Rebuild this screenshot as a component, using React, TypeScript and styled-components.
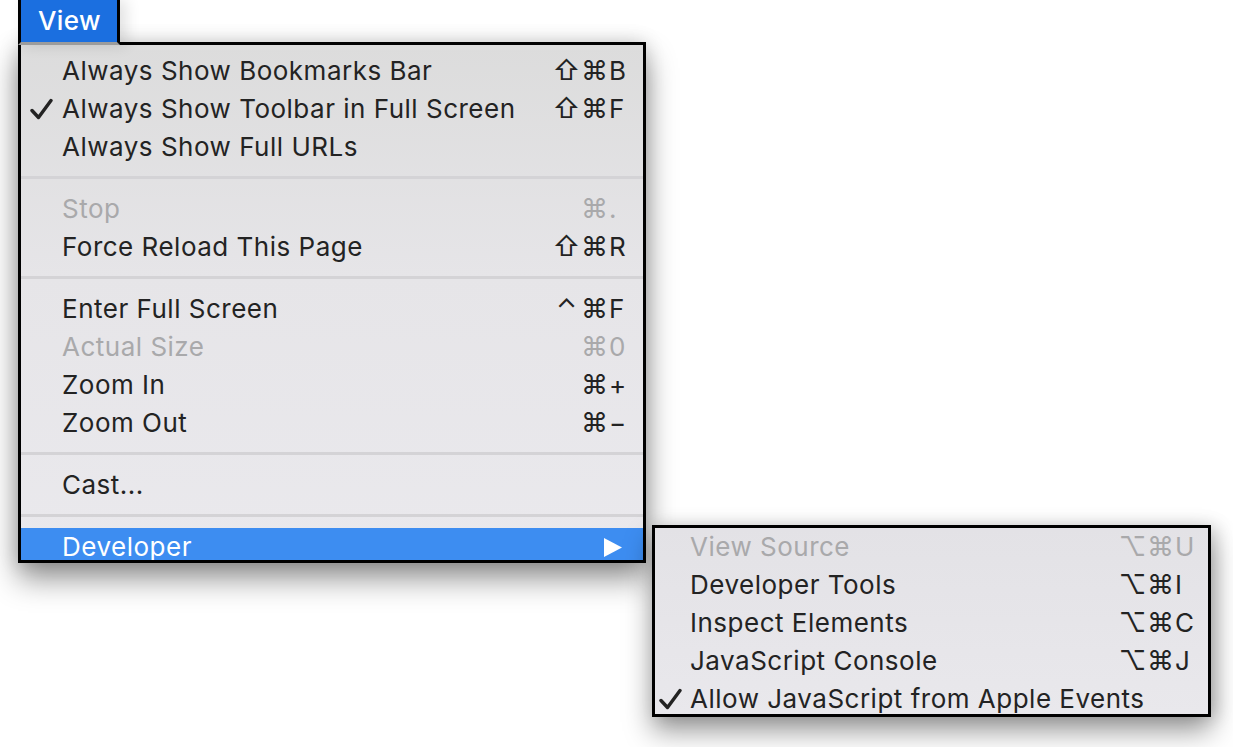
import React from "react";
import styled, { createGlobalStyle } from "styled-components";

const GlobalStyle = createGlobalStyle`
  html, body {
    margin: 0;
    padding: 0;
    background: #ffffff;
    overflow: hidden;
  }
  * {
    box-sizing: border-box;
  }
`;

const Stage = styled.div`
  width: 1233px;
  height: 747px;
  background: #ffffff;
  display: flex;
  align-items: flex-start;
  padding-left: 18px;
  overflow: hidden;
  font-family: Inter, "Noto Sans", "DejaVu Sans", sans-serif;
`;

const MainColumn = styled.div`
  width: 628px;
  display: flex;
  flex-direction: column;
  align-items: flex-start;
`;

const Tab = styled.div`
  position: relative;
  z-index: 2;
  width: 102px;
  height: 45px;
  margin-bottom: -3px;
  background: #1b6fe0;
  border-left: 3px solid #000;
  border-right: 3px solid #000;
  border-bottom: 3px solid #9c9c9c;
  padding-left: 17px;
  color: #ffffff;
  font-size: 26px;
  font-weight: 500;
  letter-spacing: 0.4px;
  line-height: 42px;
  box-shadow: 6px 0 14px rgba(0, 0, 0, 0.12);
`;

const Menu = styled.div<{ $w: number; $h: number; $pad: number }>`
  position: relative;
  z-index: 1;
  width: ${(p) => p.$w}px;
  height: ${(p) => p.$h}px;
  border: 3px solid #000;
  padding-top: ${(p) => p.$pad}px;
  background: linear-gradient(180deg, #dcdcdc 0%, #e6e5e8 45%, #eae9ed 100%);
  overflow: hidden;
  display: flex;
  flex-direction: column;
  box-shadow: 0 16px 28px rgba(0, 0, 0, 0.42), 0 0 18px rgba(0, 0, 0, 0.16);
`;

const SubMenu = styled(Menu)`
  margin-top: 525px;
  margin-left: 6px;
  z-index: 3;
  background: linear-gradient(180deg, #e3e2e6 0%, #e9e8ec 100%);
  box-shadow: 0 14px 26px rgba(0, 0, 0, 0.4), 6px 0 16px rgba(0, 0, 0, 0.14);
`;

const Row = styled.div<{ $indent: number; $padRight: number; $disabled?: boolean; $active?: boolean }>`
  flex: 0 0 38px;
  height: 38px;
  display: flex;
  align-items: center;
  padding-left: ${(p) => p.$indent}px;
  padding-right: ${(p) => p.$padRight}px;
  position: relative;
  font-size: 26px;
  letter-spacing: 0.5px;
  line-height: 38px;
  color: ${(p) => (p.$active ? "#ffffff" : p.$disabled ? "#a9a9ab" : "#232323")};
  background: ${(p) => (p.$active ? "#3d8df1" : "transparent")};
  white-space: nowrap;
`;

const Check = styled.svg<{ $left: number }>`
  position: absolute;
  left: ${(p) => p.$left}px;
  top: 8px;
  width: 23px;
  height: 22px;
`;

const Label = styled.span`
  flex: 1;
`;

const Shortcut = styled.span`
  display: flex;
  align-items: center;
`;

const Mod = styled.span<{ $w: number }>`
  width: ${(p) => p.$w}px;
  margin-right: 5px;
  display: inline-flex;
  justify-content: center;
  font-family: Inter, "DejaVu Sans", sans-serif;
  font-size: 27px;
  letter-spacing: 0;
`;

const Key = styled.span`
  width: 20px;
  margin-left: -2px;
  text-align: left;
  letter-spacing: 0;
`;

const Separator = styled.div`
  flex: 0 0 24px;
  display: flex;
  padding-top: 10px;
  &::after {
    content: "";
    display: block;
    width: 100%;
    height: 3px;
    background: #d4d3d6;
  }
`;

const Arrow = styled.svg`
  width: 18px;
  height: 19px;
`;

type Item =
  | { sep: true }
  | {
      sep?: false;
      label: string;
      mods?: string[];
      keyName?: string;
      checked?: boolean;
      disabled?: boolean;
      active?: boolean;
      submenu?: boolean;
    };

const mainItems: Item[] = [
  { label: "Always Show Bookmarks Bar", mods: ["⇧", "⌘"], keyName: "B" },
  { label: "Always Show Toolbar in Full Screen", mods: ["⇧", "⌘"], keyName: "F", checked: true },
  { label: "Always Show Full URLs" },
  { sep: true },
  { label: "Stop", mods: ["⌘"], keyName: ".", disabled: true },
  { label: "Force Reload This Page", mods: ["⇧", "⌘"], keyName: "R" },
  { sep: true },
  { label: "Enter Full Screen", mods: ["⌃", "⌘"], keyName: "F" },
  { label: "Actual Size", mods: ["⌘"], keyName: "0", disabled: true },
  { label: "Zoom In", mods: ["⌘"], keyName: "+" },
  { label: "Zoom Out", mods: ["⌘"], keyName: "−" },
  { sep: true },
  { label: "Cast..." },
  { sep: true },
  { label: "Developer", active: true, submenu: true },
];

const devItems: Item[] = [
  { label: "View Source", mods: ["⌥", "⌘"], keyName: "U", disabled: true },
  { label: "Developer Tools", mods: ["⌥", "⌘"], keyName: "I" },
  { label: "Inspect Elements", mods: ["⌥", "⌘"], keyName: "C" },
  { label: "JavaScript Console", mods: ["⌥", "⌘"], keyName: "J" },
  { label: "Allow JavaScript from Apple Events", checked: true },
];

function CheckMark({ left }: { left: number }) {
  return (
    <Check $left={left} viewBox="0 0 23 22">
      <path d="M2 12.5 L8.5 19.5 L21 2.5" fill="none" stroke="#232323" strokeWidth="3.4" strokeLinecap="round" strokeLinejoin="round" />
    </Check>
  );
}

function MenuItems({ items, indent, padRight, checkLeft }: { items: Item[]; indent: number; padRight: number; checkLeft: number }) {
  return (
    <>
      {items.map((it, i) => {
        if (it.sep) return <Separator key={i} />;
        return (
          <Row key={i} $indent={indent} $padRight={it.submenu ? 21 : padRight} $disabled={it.disabled} $active={it.active}>
            {it.checked && <CheckMark left={checkLeft} />}
            <Label>{it.label}</Label>
            {it.keyName && (
              <Shortcut>
                {it.mods?.map((m, j) => (
                  <Mod key={j} $w={23}>
                    {m}
                  </Mod>
                ))}
                <Key>{it.keyName}</Key>
              </Shortcut>
            )}
            {it.submenu && (
              <Arrow viewBox="0 0 18 19">
                <polygon points="0,0 18,9.5 0,19" fill="#ffffff" />
              </Arrow>
            )}
          </Row>
        );
      })}
    </>
  );
}

export default function App() {
  return (
    <>
      <GlobalStyle />
      <Stage>
        <MainColumn>
          <Tab>View</Tab>
          <Menu $w={628} $h={521} $pad={7}>
            <MenuItems items={mainItems} indent={41} padRight={14} checkLeft={9} />
          </Menu>
        </MainColumn>
        <SubMenu $w={559} $h={192} $pad={0}>
          <MenuItems items={devItems} indent={35} padRight={13} checkLeft={4} />
        </SubMenu>
      </Stage>
    </>
  );
}
